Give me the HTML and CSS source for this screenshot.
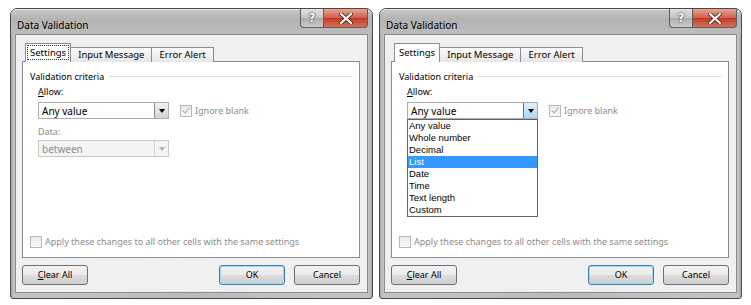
FILE: index.html
```html
<!DOCTYPE html>
<html lang="en">
<head>
    <meta charset="UTF-8">
    <title>Data Validation</title>
    <link rel="stylesheet" href="styles.css">
</head>
<body>
    <div class="screen">
        <!-- dialog 1: closed combo -->
        <div class="dialog">
            <div class="titlebar">
                <span class="title">Data Validation</span>
                <div class="caption-btns">
                    <span class="cap-help">?</span>
                    <span class="cap-close">
                        <svg width="14" height="11" viewBox="0 0 14 11"><path d="M2 1 L12 10 M12 1 L2 10" stroke="#5a2a20" stroke-width="4" stroke-linecap="round"/><path d="M2 1 L12 10 M12 1 L2 10" stroke="#fff" stroke-width="2.2" stroke-linecap="round"/></svg>
                    </span>
                </div>
            </div>
            <div class="client">
                <div class="tabs">
                    <span class="tab active"><span class="focus">Settings</span></span>
                    <span class="tab">Input Message</span>
                    <span class="tab">Error Alert</span>
                </div>
                <div class="panel">
                    <div class="group-title"><span>Validation criteria</span></div>
                    <div class="field">
                        <div class="lbl"><u>A</u>llow:</div>
                        <div class="row">
                            <div class="combo">
                                <span class="combo-text">Any value</span>
                                <span class="drop"><span class="arrow"></span></span>
                            </div>
                            <div class="check disabled"><span class="box on"></span>Ignore blank</div>
                        </div>
                    </div>
                    <div class="field disabled">
                        <div class="lbl">Data:</div>
                        <div class="combo off">
                            <span class="combo-text">between</span>
                            <span class="drop"><span class="arrow"></span></span>
                        </div>
                    </div>
                    <div class="check disabled apply"><span class="box"></span>Apply these changes to all other cells with the same settings</div>
                </div>
                <div class="buttons">
                    <span class="btn"><u>C</u>lear All</span>
                    <span class="btn-gap"></span>
                    <span class="btn default">OK</span>
                    <span class="btn">Cancel</span>
                </div>
            </div>
        </div>

        <!-- dialog 2: open combo list -->
        <div class="dialog">
            <div class="titlebar">
                <span class="title">Data Validation</span>
                <div class="caption-btns">
                    <span class="cap-help">?</span>
                    <span class="cap-close">
                        <svg width="14" height="11" viewBox="0 0 14 11"><path d="M2 1 L12 10 M12 1 L2 10" stroke="#5a2a20" stroke-width="4" stroke-linecap="round"/><path d="M2 1 L12 10 M12 1 L2 10" stroke="#fff" stroke-width="2.2" stroke-linecap="round"/></svg>
                    </span>
                </div>
            </div>
            <div class="client">
                <div class="tabs">
                    <span class="tab active"><span class="nofocus">Settings</span></span>
                    <span class="tab">Input Message</span>
                    <span class="tab">Error Alert</span>
                </div>
                <div class="panel">
                    <div class="group-title"><span>Validation criteria</span></div>
                    <div class="field">
                        <div class="lbl"><u>A</u>llow:</div>
                        <div class="row">
                            <div class="combo open">
                                <span class="combo-text">Any value</span>
                                <span class="drop"><span class="arrow"></span></span>
                                <ul class="listbox">
                                    <li>Any value</li>
                                    <li>Whole number</li>
                                    <li>Decimal</li>
                                    <li class="sel">List</li>
                                    <li>Date</li>
                                    <li>Time</li>
                                    <li>Text length</li>
                                    <li>Custom</li>
                                </ul>
                            </div>
                            <div class="check disabled"><span class="box on"></span>Ignore blank</div>
                        </div>
                    </div>
                    <!-- covered by the open list -->
                    <div class="field disabled covered">
                        <div class="lbl">&nbsp;</div>
                        <div class="combo off"></div>
                    </div>
                    <div class="check disabled apply"><span class="box"></span>Apply these changes to all other cells with the same settings</div>
                </div>
                <div class="buttons">
                    <span class="btn"><u>C</u>lear All</span>
                    <span class="btn-gap"></span>
                    <span class="btn default">OK</span>
                    <span class="btn">Cancel</span>
                </div>
            </div>
        </div>
    </div>
</body>
</html>
```

FILE: styles.css
```css
body {
    margin: 0;
    background: #fff;
    font-family: "Noto Sans", "Open Sans", sans-serif;
    font-size: 9px;
    color: #000;
}
.screen {
    display: flex;
    gap: 6px;
    padding: 8px 0 0 10px;
}
.dialog {
    width: 353px;
    height: 284px;
    border: 1px solid #4a4a4a;
    border-radius: 7px 7px 3px 3px;
    padding: 0 4px 5px;
    background: linear-gradient(to right, #a9a9a9, #c4c4c4 3px, #bcbcbc 50%, #c4c4c4 calc(100% - 3px), #a9a9a9);
    display: flex;
    flex-direction: column;
}
.titlebar {
    height: 24px;
    display: flex;
    justify-content: space-between;
    align-items: flex-start;
    margin: 0 -4px;
    padding: 0 4px;
    border-top: 1px solid #eaeaea;
    border-radius: 6px 6px 0 0;
    background: linear-gradient(#c6c6c6, #b3b3b3 40%, #bdbdbd);
}
.title {
    font-size: 10px;
    padding: 8px 0 0 2px;
}
.caption-btns {
    display: flex;
    margin-top: -1px;
}
.cap-help, .cap-close {
    height: 18px;
    display: flex;
    align-items: center;
    justify-content: center;
    border: 1px solid #5e5e5e;
    border-top: none;
}
.cap-help {
    width: 22px;
    border-right: none;
    border-radius: 0 0 0 4px;
    background: linear-gradient(#e2e2e2, #c4c4c4 50%, #adadad 51%, #cbcbcb);
    color: #fff;
    font: bold 12px "DejaVu Sans", sans-serif;
    text-shadow: 0 0 2px #333, 0 0 1px #333;
}
.cap-close {
    width: 43px;
    border-radius: 0 0 4px 0;
    background: linear-gradient(#e7a595, #d2614d 48%, #c23a24 52%, #d8705b);
}
.client {
    flex: 1;
    background: #f0f0f0;
    border: 1px solid #8c8c8c;
    padding: 9px 7px 7px 6px;
    display: flex;
    flex-direction: column;
}
.tabs {
    display: flex;
    align-items: flex-end;
    height: 18px;
    padding-left: 5px;
    position: relative;
    z-index: 1;
    margin-bottom: -1px;
    font-size: 9.5px;
}
.tab {
    height: 14px;
    line-height: 14px;
    padding: 0 7px;
    border: 1px solid #898c95;
    border-bottom: none;
    margin-right: -1px;
    background: linear-gradient(#fbfbfb, #e6e6e6);
}
.tab.active {
    height: 18px;
    line-height: 17px;
    padding: 0 2px;
    margin: 0 -1px 0 -2px;
    background: #fff;
    z-index: 2;
}
.focus, .nofocus {
    padding: 0 2px;
}
.focus {
    outline: 1px dotted #333;
}
.panel {
    flex: 1;
    background: #fff;
    border: 1px solid #898c95;
    padding: 8px 7px 9px;
    display: flex;
    flex-direction: column;
}
.group-title {
    display: flex;
    align-items: center;
    gap: 5px;
    line-height: 13px;
}
.group-title::after {
    content: "";
    flex: 1;
    border-top: 1px solid #dcdcdc;
}
.field {
    padding-left: 8px;
}
.lbl {
    margin-top: 2px;
    line-height: 13px;
}
.field.disabled .lbl {
    color: #8d8d8d;
    margin-top: 6px;
}
.field.covered {
    visibility: hidden;
}
.row {
    display: flex;
    align-items: center;
    gap: 11px;
    margin-top: 4px;
}
.combo {
    width: 129px;
    height: 15px;
    border: 1px solid #abadb3;
    background: #fff;
    display: flex;
    align-items: center;
    position: relative;
    font-size: 10px;
}
.field.disabled .combo {
    margin-top: 2px;
}
.combo-text {
    flex: 1;
    padding-left: 3px;
}
.drop {
    width: 13px;
    height: 15px;
    border-left: 1px solid #8a8a8a;
    background: linear-gradient(#f2f2f2, #d4d4d4);
    display: flex;
    align-items: center;
    justify-content: center;
}
.arrow {
    border-left: 3px solid transparent;
    border-right: 3px solid transparent;
    border-top: 4px solid #000;
}
.combo.off {
    background: #f4f4f4;
    border-color: #c9c9c9;
    color: #8d8d8d;
}
.combo.off .drop {
    background: #f4f4f4;
    border-left-color: #d5d5d5;
}
.combo.off .arrow {
    border-top-color: #b4b4b4;
}
.combo.open .drop {
    background: linear-gradient(#e0f1fb, #a9d7f3);
    border-left-color: #3c7fb1;
}
.listbox {
    position: absolute;
    left: -1px;
    top: 16px;
    width: 129px;
    margin: 0;
    padding: 0;
    list-style: none;
    background: #fff;
    border: 1px solid #646464;
    font: 9.5px "Liberation Sans", Arial, sans-serif;
    z-index: 5;
}
.listbox li {
    height: 12px;
    line-height: 12px;
    padding-left: 1px;
}
.listbox li.sel {
    background: #3399ff;
    color: #fff;
}
.check {
    display: flex;
    align-items: center;
    gap: 3px;
}
.check.disabled {
    color: #8d8d8d;
}
.box {
    width: 10px;
    height: 10px;
    border: 1px solid #b8b8b8;
    background: linear-gradient(#eaeaea, #f8f8f8);
    position: relative;
}
.box.on::after {
    content: "";
    position: absolute;
    left: 3px;
    top: 0;
    width: 3px;
    height: 6px;
    border: solid #aaa;
    border-width: 0 1.5px 1.5px 0;
    transform: rotate(40deg);
}
.apply {
    margin-top: auto;
}
.buttons {
    display: flex;
    gap: 9px;
    margin-top: 7px;
}
.btn {
    width: 64px;
    height: 18px;
    line-height: 18px;
    text-align: center;
    border: 1px solid #707070;
    border-radius: 3px;
    background: linear-gradient(#f2f2f2, #ebebeb 50%, #dddddd 51%, #cfcfcf);
}
.btn.default {
    border-color: #3c7fb1;
    box-shadow: inset 0 0 0 1px #9fd8f5;
}
.btn-gap {
    flex: 1;
}
```
